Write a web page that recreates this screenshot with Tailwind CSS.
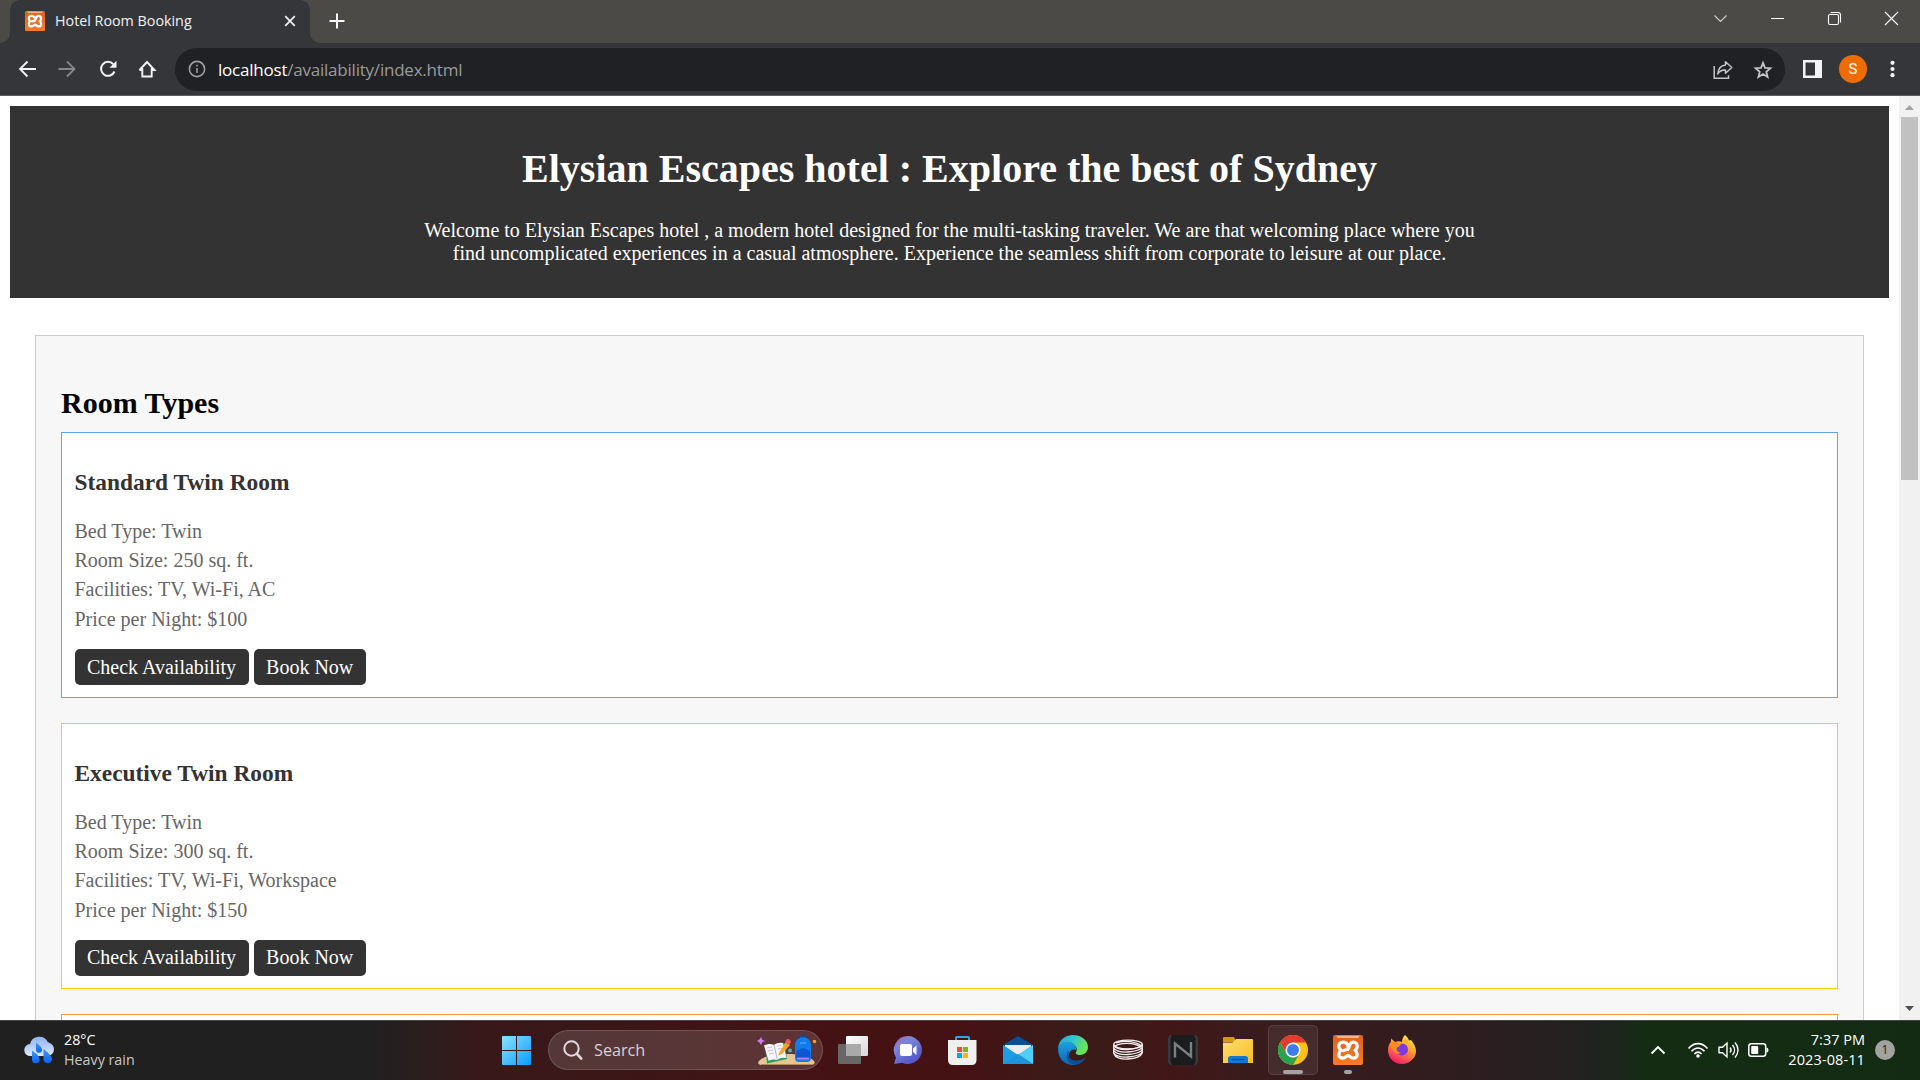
<!DOCTYPE html>
<html lang="en">
<head>
<meta charset="utf-8">
<title>Hotel Room Booking</title>
<script src="https://cdn.jsdelivr.net/npm/@tailwindcss/browser@4"></script>
</head>
<body class="flex h-screen w-screen flex-col overflow-hidden bg-white font-['Open_Sans',sans-serif]">

<svg class="absolute size-0">
  <defs>
    <linearGradient id="orange" x1="0" y1="0" x2="0" y2="1"><stop offset="0" stop-color="#dc6320"/><stop offset="1" stop-color="#fb7a24"/></linearGradient>
    <symbol id="xampp" viewBox="0 0 30 30">
      <rect width="30" height="30" rx="2" fill="url(#orange)"/>
      <path d="M3 .8h24l-2 2.200H5z" fill="#f7b48a"/>
      <path d="M15 10.500C13.500 7.500 11.500 7.200 9.800 7.200 7.300 7.200 5.800 9 5.800 11.200c0 1.900 1 3.200 2.200 4.100-1.200.9-2.200 2.200-2.200 4.100 0 2.200 1.600 3.800 3.900 3.800 3 0 3.600-2.700 5.300-2.700s2.300 2.700 5.300 2.700c2.300 0 3.900-1.600 3.900-3.800 0-1.900-1-3.200-2.200-4.100 1.200-.9 2.200-2.200 2.200-4.100 0-2.200-1.500-4-4-4-2.700 0-3.200 2-3.700 3.800-.4 1.500-1 2.500-2.500 3.500l-3.500 1" fill="none" stroke="#fff" stroke-width="3.300" stroke-linejoin="round" stroke-linecap="round"/>
      <path d="M15 10.500v4" stroke="#fff" stroke-width="3" stroke-linecap="round"/>
    </symbol>
  </defs>
</svg>

<!-- Tab strip -->
<div class="flex h-[43px] shrink-0 items-stretch bg-[#4c4a46] text-white">
  <div class="flex w-[10px] items-end"><svg class="size-[10px]" viewBox="0 0 10 10"><path d="M10 0v10H0A10 10 0 0 0 10 0z" fill="#35363a"/></svg></div>
  <div class="flex w-[300px] items-center rounded-t-[10px] bg-[#35363a] pb-px pl-[15px] pr-[14px]">
    <svg class="size-5"><use href="#xampp"/></svg>
    <span class="ml-[10px] grow text-[14.300px] leading-5 text-[#f1f3f4]">Hotel Room Booking</span>
    <svg class="size-3" viewBox="0 0 12 12"><path d="M1.200 1.200l9.600 9.600M10.800 1.200l-9.600 9.600" stroke="#f1f3f4" stroke-width="1.700"/></svg>
  </div>
  <div class="flex w-[10px] items-end"><svg class="size-[10px]" viewBox="0 0 10 10"><path d="M0 0v10h10A10 10 0 0 1 0 0z" fill="#35363a"/></svg></div>
  <div class="flex grow items-center pb-px pl-[9px]">
    <svg class="size-4" viewBox="0 0 16 16"><path d="M8 .5v15M.5 8h15" stroke="#fff" stroke-width="2"/></svg>
  </div>
  <div class="flex items-start gap-[42px] pr-[21px] pt-[11px]">
    <svg class="h-[15px] w-[15px]" viewBox="0 0 15 15" fill="none" stroke="#d0d0ce" stroke-width="1.100"><path d="M1.500 4.500l6 6 6-6"/></svg>
    <svg class="h-[15px] w-[15px]" viewBox="0 0 15 15" stroke="#fff"><path d="M1 7.500h13"/></svg>
    <svg class="h-[15px] w-[15px]" viewBox="0 0 15 15" fill="none" stroke="#fff" stroke-width="1.100"><rect x="1.500" y="3.500" width="10" height="10" rx="1.500"/><path d="M3.500 1.500h7.500a2.500 2.500 0 0 1 2.500 2.500v7.500"/></svg>
    <svg class="h-[15px] w-[15px]" viewBox="0 0 15 15" stroke="#fff" stroke-width="1.200"><path d="M1 1l13 13M14 1L1 14"/></svg>
  </div>
</div>

<!-- Toolbar -->
<div class="flex h-[53px] shrink-0 items-center border-b border-[#5d5d61] bg-[#35363a] pl-[17px]">
  <div class="flex w-[158px] gap-5">
    <svg class="size-5" viewBox="0 0 20 20" fill="none" stroke="#f1f3f4" stroke-width="1.800"><path d="M19 10H3M10.500 2.500L3 10l7.500 7.500"/></svg>
    <svg class="size-5" viewBox="0 0 20 20" fill="none" stroke="#87888b" stroke-width="1.800"><path d="M1.500 10h16M10 2.500l7.500 7.500-7.500 7.500"/></svg>
    <svg class="ml-px size-5" viewBox="0 0 20 20" fill="none" stroke="#f1f3f4" stroke-width="2"><path d="M16.500 12.500A7 7 0 1 1 15.300 5.200"/><path d="M18.500 1.800v7h-7z" fill="#f1f3f4" stroke="none"/></svg>
    <svg class="-ml-px size-5" viewBox="0 0 20 20" fill="none" stroke="#f1f3f4" stroke-width="1.900"><path d="M5.300 9v8.500h9.400V9M2.500 11L10 3l7.500 8h-2.800"/><path d="M2.500 11h2.800"/></svg>
  </div>
  <div class="flex h-[43px] w-[1610px] items-center rounded-full bg-[#202124] pl-[13px] pr-[12px]">
    <svg class="size-[18px]" viewBox="0 0 18 18" fill="none" stroke="#9aa0a6" stroke-width="1.600"><circle cx="9" cy="9" r="7.600"/><path d="M9 8v5M9 4.800v1.800"/></svg>
    <span class="ml-[12px] grow pt-[2px] text-[17px] leading-6 tracking-[-0.22px] text-[#9a9b9d]"><span class="text-white">localhost</span>/availability/index.html</span>
    <svg class="mr-[20px] mt-px size-5" viewBox="0 0 20 20" fill="none" stroke="#c4c5c7" stroke-width="1.500"><path d="M1.200 6v12.200h14.300v-3"/><path d="M12.500 1.800L18.800 7.500l-6.300 5.700V10C9 9.800 6.500 11 4.800 14 5.200 8.500 8 5.500 12.500 5z" stroke-linejoin="round"/></svg>
    <svg class="mt-px size-5" viewBox="0 0 20 20" fill="none" stroke="#c4c5c7" stroke-width="1.800"><path d="M10 2.800l2 5 5.400.4-4.100 3.500 1.300 5.300L10 14.100 5.400 17l1.300-5.300L2.600 8.200 8 7.800z"/></svg>
  </div>
  <svg class="ml-[18px] h-[18px] w-[19px]" viewBox="0 0 19 18"><path fill="#f1f3f4" fill-rule="evenodd" d="M0 0h19v18H0zM2.500 2.500v13H12v-13z"/></svg>
  <div class="ml-[17px] flex size-7 items-center justify-center rounded-full bg-[#ef6c00] font-[Roboto,sans-serif] text-[15px] text-white">S</div>
  <svg class="ml-[23px] h-[18px] w-[5px]" viewBox="0 0 5 18" fill="#f1f3f4"><circle cx="2.500" cy="2.800" r="2.100"/><circle cx="2.500" cy="9" r="2.100"/><circle cx="2.500" cy="15.200" r="2.100"/></svg>
</div>

<!-- Web page -->
<div class="flex min-h-0 grow">
  <main class="w-[1899px] overflow-hidden p-[10px] font-['Liberation_Serif',serif] text-[20px] leading-[23px]">
    <header class="h-[192px] bg-[#333] pt-[40px] text-center text-white">
      <h1 class="text-[40px] font-bold leading-[45px]">Elysian Escapes hotel : Explore the best of Sydney</h1>
      <p class="mt-[28px]">Welcome to Elysian Escapes hotel , a modern hotel designed for the multi-tasking traveler. We are that welcoming place where you<br>find uncomplicated experiences in a casual atmosphere. Experience the seamless shift from corporate to leisure at our place.</p>
    </header>
    <section class="mx-[25px] mt-[37px] border border-[#ccc] bg-[#f7f7f7] px-[25px] pt-[49.500px]">
      <h2 class="mb-[12.500px] text-[30px] font-bold leading-[34px]">Room Types</h2>

      <article class="mb-[25px] h-[266px] border border-[#66a3ee] bg-white px-[12.500px] pt-[35.900px]">
        <h3 class="text-[23.400px] font-bold leading-[27px] text-[#333]">Standard Twin Room</h3>
        <div class="mt-[23.950px] flex flex-col gap-[6.250px] text-[#666]">
          <p>Bed Type: Twin</p><p>Room Size: 250 sq. ft.</p><p>Facilities: TV, Wi-Fi, AC</p><p>Price per Night: $100</p>
        </div>
        <div class="mt-[18.750px] flex gap-[5px] text-white">
          <button class="rounded-[5px] bg-[#333] px-[12.500px] py-[6.250px]">Check Availability</button>
          <button class="rounded-[5px] bg-[#333] px-[12.500px] py-[6.250px]">Book Now</button>
        </div>
      </article>

      <article class="mb-[25px] h-[266px] border border-[#ffcc00] bg-white px-[12.500px] pt-[35.900px]">
        <h3 class="text-[23.400px] font-bold leading-[27px] text-[#333]">Executive Twin Room</h3>
        <div class="mt-[23.950px] flex flex-col gap-[6.250px] text-[#666]">
          <p>Bed Type: Twin</p><p>Room Size: 300 sq. ft.</p><p>Facilities: TV, Wi-Fi, Workspace</p><p>Price per Night: $150</p>
        </div>
        <div class="mt-[18.550px] flex gap-[5px] text-white">
          <button class="rounded-[5px] bg-[#333] px-[12.500px] py-[6.250px]">Check Availability</button>
          <button class="rounded-[5px] bg-[#333] px-[12.500px] py-[6.250px]">Book Now</button>
        </div>
      </article>

      <article class="h-[266px] border border-[#ff9933] bg-white"></article>
    </section>
  </main>
  <div class="flex w-[21px] flex-col items-center bg-[#f1f1f1] pb-[9px] pt-[9px]">
    <svg class="h-[5px] w-[9px]" viewBox="0 0 9 5"><path d="M0 5L4.500 0 9 5z" fill="#a3a3a3"/></svg>
    <div class="mt-[7px] h-[363px] w-[17px] bg-[#c1c1c1]"></div>
    <svg class="mt-auto h-[5px] w-[9px]" viewBox="0 0 9 5"><path d="M0 0L4.500 5 9 0z" fill="#505050"/></svg>
  </div>
</div>

<!-- Taskbar -->
<div class="flex h-[60px] shrink-0 items-center border-t border-[#454343] bg-[linear-gradient(90deg,#202020_0px,#202020_370px,#2a1e1e_420px,#381819_475px,#3c1617_650px,#451214_830px,#451214_960px,#3b1b17_1060px,#3b1b17_1110px,#421617_1170px,#3a1b1c_1240px,#331c1e_1400px,#2c1e20_1490px,#202220_1590px,#1a271a_1625px,#132d13_1650px,#132b13_1920px)] pb-px text-[14.300px] leading-5 text-white">
  <div class="flex w-[487px] items-center pl-[24px]">
    <svg class="h-[28px] w-[31px]" viewBox="0 0 31 28">
      <defs>
        <linearGradient id="cloud" x1="0" y1="0" x2="0" y2="1"><stop offset="0" stop-color="#8db4f3"/><stop offset="1" stop-color="#dfe9fb"/></linearGradient>
        <linearGradient id="drop" x1="0" y1="0" x2="0" y2="1"><stop offset="0" stop-color="#3d97f0"/><stop offset="1" stop-color="#0a63f5"/></linearGradient>
      </defs>
      <path d="M6.500 20a6 6 0 0 1-.5-12A9.500 9.500 0 0 1 24 6.500a6.800 6.800 0 0 1 0 13.500z" fill="url(#cloud)"/>
      <path d="M5 8.500c4-1 6 .5 7.500 2M25 7c-4-.5-6 1-7.500 2.500" stroke="#9fbef0" fill="none"/>
      <g fill="url(#drop)"><path d="M12 6.500c0 0 6 4 6 7a3 3 0 0 1-6 .5z"/><path d="M8 14.500c0 0 7.500 4.500 7.500 8.500a3.700 3.700 0 0 1-7.500 1z"/><path d="M19.500 13c0 0 8.500 6 8.500 10.500a4.300 4.300 0 0 1-8.500 0z"/></g>
    </svg>
    <div class="ml-[9px]"><div>28°C</div><div class="text-[#c8c8c8]">Heavy rain</div></div>
  </div>
  <div class="flex w-[61px] pl-[15px]">
    <svg class="size-[29px]" viewBox="0 0 29 29"><defs><linearGradient id="win" x1="0" y1="0" x2="1" y2="1"><stop offset="0" stop-color="#8ae3ff"/><stop offset="1" stop-color="#0c9bff"/></linearGradient></defs><path d="M0 1q0-1 1-1h13v14H0zM15 0h13q1 0 1 1v13H15zM0 15h14v14H1q-1 0-1-1zM15 15h14v13q0 1-1 1H15z" fill="url(#win)"/></svg>
  </div>
  <div class="flex h-10 w-[275px] items-center rounded-full border border-white/15 bg-white/[0.14] pl-[14px] pr-[5px]">
    <svg class="size-5" viewBox="0 0 20 20" fill="none" stroke="#dedada" stroke-width="2"><circle cx="8.500" cy="8.500" r="7.200"/><path d="M13.700 13.700l4.500 4.800" stroke-width="2.600" stroke-linecap="round"/></svg>
    <span class="ml-[11px] grow text-[16.200px] text-[#d9d2d3]">Search</span>
    <svg class="mt-[3px] h-[32px] w-[60px]" viewBox="0 0 60 32">
      <path d="M2 25c5-5 14-7 28-7s22 2 27 7c2 3-1 4-4 4H6c-4 0-6-1-4-4z" fill="#e7c494"/>
      <path d="M4 28.500h52" stroke="#b48a5c" stroke-width="1.200"/>
      <path d="M8 10l20-3 2 16-20 4.500z" fill="#2f9e56"/>
      <path d="M7 9.500c4-2 7-2 10-.5 2-2 6-2.500 9-2l3.500 15c-4-.5-7 0-9 2-3-1-6-.8-9 .8z" fill="#f7f5fb"/>
      <path d="M17 9l3.500 15" stroke="#b9b3cc"/>
      <path d="M10 12l5-1M11 15l5-1M12 18l5-1M20 10l4-.5M21 13l4-.5" stroke="#b9b3cc" stroke-width=".8"/>
      <path d="M22 17l7-11 4 3-8 9-4 1.500z" fill="#f5a623"/><path d="M28 6l2-3c2-.5 4 1 4 3L32 9z" fill="#ee5a52"/>
      <path d="M4 1l1.200 2.700L8 5 5.500 6 4 9 2.500 6.500 0 5l2.500-1.500z" fill="#d07bf5"/>
      <circle cx="33" cy="14.500" r="2" fill="#4fb3bf"/><circle cx="57.500" cy="5.500" r="1.800" fill="#f2a900"/>
      <path d="M43.500 2c0-3 5-3 5 0" fill="none" stroke="#1153b0" stroke-width="1.500"/>
      <path d="M38 9c0-10 16-10 16 0v13c0 3-2 4-4 4h-8c-2 0-4-1-4-4z" fill="#0f7df0"/>
      <path d="M39 16c4-5 10-5 14 0v6H39z" fill="#0a57d0"/><path d="M40 22.500h12" stroke="#b583f2" stroke-width="1.800"/><path d="M43 7h6" stroke="#6cb8ff"/>
    </svg>
  </div>

  <div class="ml-[2px] flex h-full items-center">
    <div class="flex w-[55px] justify-center"><svg class="size-[30px]" viewBox="0 0 30 30"><defs><linearGradient id="tv" x1="0" y1="0" x2="1" y2="1"><stop offset="0" stop-color="#fff"/><stop offset="1" stop-color="#d6d6d6"/></linearGradient></defs><rect x="8" y="1" width="22" height="20" rx="1" fill="url(#tv)"/><rect y="9" width="23" height="20" rx="1" fill="#676767"/><path d="M8 9h15v12H8z" fill="#a9a9a9"/></svg></div>
    <div class="flex w-[55px] justify-center"><svg class="size-[30px]" viewBox="0 0 30 30"><defs><linearGradient id="chat" x1="0" y1="0" x2=".7" y2="1"><stop offset="0" stop-color="#a75fa6"/><stop offset=".35" stop-color="#7a86d8"/><stop offset="1" stop-color="#5053c4"/></linearGradient></defs><path d="M15 1a14 14 0 1 1-6 26.700L1 29l2-6.500A14 14 0 0 1 15 1z" fill="url(#chat)"/><rect x="7" y="9" width="12" height="12" rx="2" fill="#fff"/><path d="M20 13.500l3.500-3v9.500L20 17z" fill="#fff"/></svg></div>
    <div class="flex w-[55px] justify-center pr-px"><svg class="size-[30px]" viewBox="0 0 30 30"><path d="M9 6V2.500Q9 2 9.500 2h12q.5 0 .5.500V6" fill="none" stroke="#23a8e4" stroke-width="2"/><path d="M1 5h28.500v20q0 5-5 5H6q-5 0-5-5z" fill="#f0f0f0"/><path d="M10 12h5v5h-5z" fill="#f25022"/><path d="M16 12h5v5h-5z" fill="#7fba00"/><path d="M10 18h5v5h-5z" fill="#00a4ef"/><path d="M16 18h5v5h-5z" fill="#ffb900"/></svg></div>
    <div class="flex w-[55px] justify-center"><svg class="size-[30px]" viewBox="0 0 30 30"><path d="M0 10L15 1l15 9v8H0z" fill="#0a4f94"/><path d="M2 10h26v10H2z" fill="#ececec"/><path d="M0 10l15 10 15-10v19H0z" fill="#1a9fe6"/><path d="M15 20L30 10v19z" fill="#4fd0fb"/><path d="M0 29h30L15 19z" fill="#1b94de"/></svg></div>
    <div class="flex w-[55px] justify-center"><svg class="size-[30px]" viewBox="0 0 30 30"><defs><linearGradient id="e1" x1="0" y1="0" x2="1" y2=".4"><stop offset="0" stop-color="#1f9fd8"/><stop offset=".5" stop-color="#35c5d0"/><stop offset="1" stop-color="#6be650"/></linearGradient><linearGradient id="e2" x1="0" y1="0" x2="0" y2="1"><stop offset="0" stop-color="#1ea0e0"/><stop offset="1" stop-color="#0b64b8"/></linearGradient></defs>
      <path d="M0 13C1 5 7 0 15 0c9 0 15 6 15 12 0 5-4 8-8 8-3 0-5-1-4-3 2-3 0-8-6-8C6 9 1 11 0 13z" fill="url(#e1)"/>
      <path d="M0 14c1-5 5-7.500 9.500-7.500 6 0 9 4 8.500 8.500-3-2-8 1-7 7 .5 4 4 7 8 7.500-1.500.5-3 .5-4 .5C6 30 0 23 0 14z" fill="url(#e2)"/>
      <path d="M11 15.500c-2 5 1 10 7 10 4 0 7-1 10-3-3 5-7 7-10 7.300-9-.5-12-9-7-14.300z" fill="#0d4f96"/></svg></div>
    <div class="flex w-[55px] justify-center"><svg class="size-[30px]" viewBox="0 0 30 30" fill="none" stroke="#f4eeee" stroke-width="1.300"><ellipse cx="15" cy="9.500" rx="14.300" ry="4.300"/><path d="M.7 9.500c0 3 6 5.500 14.300 5s14.300-3 14.300-5.500M.7 12c0 3 6 5.500 14.300 5s14.300-3 14.300-5.500M.7 14.500c0 3 6 5.500 14.300 5s14.300-3 14.300-5.500M.7 17c0 3 6 5.500 14.300 5s14.300-3 14.300-5.500M1 19c1 3 6 5.500 14 5s13-3 14.300-6M.7 10v9M29.300 10v8M3 8c6-3 18-2 25 2.500M2 11c6-4 19-3.500 26 1"/></svg></div>
    <div class="flex w-[55px] justify-center"><svg class="size-[30px]" viewBox="0 0 30 30"><rect width="30" height="30" rx="4" fill="#1b1c1d"/><path d="M0 4q0-4 4-4l-1.500 3v24L4 30q-4 0-4-4zM30 4q0-4-4-4l1.500 3v24L26 30q4 0 4-4z" fill="#3a3b3c"/><path d="M7 22.500V8.500L23 21.500V7" fill="none" stroke="#7d7e80" stroke-width="2.400"/></svg></div>
    <div class="flex w-[55px] justify-center"><svg class="size-[30px]" viewBox="0 0 30 30"><defs><linearGradient id="fold" x1="0" y1="0" x2="1" y2="1"><stop offset="0" stop-color="#ffdf73"/><stop offset="1" stop-color="#f8bd1e"/></linearGradient></defs><path d="M0 3q0-1 1-1h9q1 0 1.500 1L13 7H0z" fill="#d79b07"/><path d="M0 7.500h9.500L13 4h16q1 0 1 1v23H0z" fill="url(#fold)"/><path d="M5 28v-4.500q0-2.500 2.500-2.500h15q2.500 0 2.500 2.500V28z" fill="#0f7bd0"/><path d="M8.500 24.500h13" stroke="#0a4d8d" stroke-width="1.300"/></svg></div>
    <div class="relative flex h-[50px] w-[55px] items-center justify-center">
      <div class="flex size-[50px] items-center justify-center rounded-[5px] border border-white/10 bg-white/[0.07]"><svg class="size-[30px]" viewBox="0 0 30 30"><circle cx="15" cy="15" r="15" fill="#fbc116"/><path d="M15 7.500H28A15 15 0 0 0 2 7.500l6.500 11.200z" fill="#e33b2e"/><path d="M2 7.500A15 15 0 0 0 15 30l6.500-11.300A7.500 7.500 0 0 1 8.500 18.700z" fill="#2ba24c"/><circle cx="15" cy="15" r="7.500" fill="#fff"/><circle cx="15" cy="15" r="6" fill="#3b7ded"/></svg></div>
      <div class="absolute bottom-px left-[18px] h-1 w-5 rounded-full bg-[#a8a3a3]"></div>
    </div>
    <div class="relative flex h-[50px] w-[55px] items-center justify-center"><svg class="size-[30px]"><use href="#xampp"/></svg><div class="absolute bottom-px left-[24px] h-1 w-2 rounded-full bg-[#a8a3a3]"></div></div>
    <div class="flex w-[55px] justify-center pr-px"><svg class="size-[30px]" viewBox="0 0 30 30"><defs><linearGradient id="ff" x1=".8" y1="0" x2=".3" y2="1"><stop offset="0" stop-color="#fff14a"/><stop offset=".45" stop-color="#ff9a2e"/><stop offset="1" stop-color="#f5146e"/></linearGradient></defs>
      <path d="M18 0c2 2 3 3 4 5.500L24 5c3 4 5 7 5 11.500A14 13 0 0 1 15 29C7 29 1 23 1 15.500c0-4 1-6.500 3-8.500V3.500L8 7c3-1 5-1 7 0 0-3 1-5 3-7z" fill="url(#ff)"/>
      <circle cx="15" cy="14.500" r="6" fill="#7b3ae0"/><path d="M3.500 7c4-1 8 1 11 3-2 0-2 2-4.500 2.500-1 3 1 5 4 5.500-5 2-10-1-10.500-11z" fill="#ff8a1f"/><path d="M15 8c4-.5 6 2 6.500 5 1-3 0-7-3-9-2 1-3 2-3.500 4z" fill="#ffb32c"/></svg></div>
  </div>

  <div class="ml-auto flex items-center pr-[25px]">
    <svg class="h-[10px] w-[16px]" viewBox="0 0 16 10" fill="none" stroke="#fff" stroke-width="1.900"><path d="M1.500 8.500L8 2l6.500 6.500"/></svg>
    <svg class="ml-[21px] h-[18px] w-[22px]" viewBox="0 0 22 18" fill="none" stroke="#fff" stroke-width="1.600"><path d="M1.500 7.500c5.500-6.500 13.500-6.500 19 0M4.500 10.300c4-4.500 9-4.500 13 0M7.400 13c2.400-2.500 4.800-2.500 7.200 0"/><circle cx="11" cy="15" r="1.800" fill="#fff" stroke="none"/></svg>
    <svg class="ml-[9px] h-[18px] w-[21px]" viewBox="0 0 21 18" fill="none" stroke="#fff" stroke-width="1.400"><path d="M1 6.200h3.500L9 2v14l-4.500-4.200H1zM12 6.500c1.300 1.500 1.300 3.500 0 5M14.500 4c2.700 3 2.700 7 0 10M17 1.500c4 4.500 4 10.500 0 15"/></svg>
    <svg class="ml-[9px] h-[14px] w-[21px]" viewBox="0 0 21 14"><rect x=".8" y=".8" width="16.900" height="12.400" rx="2.500" fill="none" stroke="#fff" stroke-width="1.500"/><rect x="3.200" y="3" width="7" height="8" rx="1" fill="#fff"/><path d="M18.500 4.500q2 0 2 2.500t-2 2.500z" fill="#fff"/></svg>
    <div class="ml-[19px] w-[77px] whitespace-nowrap text-right text-[14.500px]"><div>7:37 PM</div><div class="tracking-[0.1px]">2023-08-11</div></div>
    <div class="ml-[10px] flex size-5 items-center justify-center rounded-full bg-[#a2a3a0] text-[12px] leading-none text-[#1c1c1c]">1</div>
  </div>
</div>
</body>
</html>
